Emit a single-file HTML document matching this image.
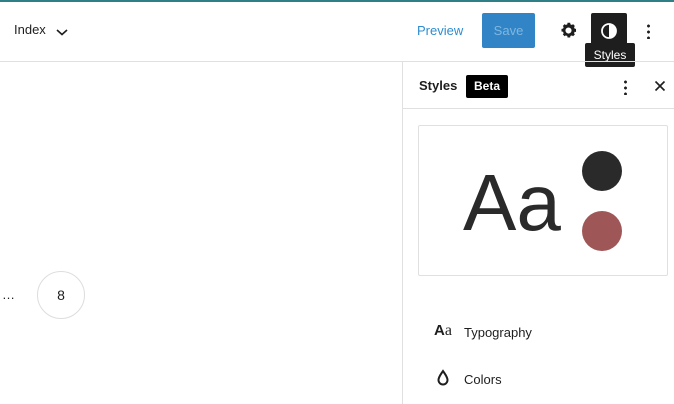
<!DOCTYPE html>
<html><head><meta charset="utf-8"><style>
*{box-sizing:border-box;margin:0;padding:0}
body{width:674px;height:404px;overflow:hidden;background:#fff;font-family:"Liberation Sans",sans-serif;color:#1e1e1e;position:relative}
.a{position:absolute}
</style></head><body>
<div class="a" style="left:0;top:0;width:674px;height:2px;background:#2f7f86"></div>
<div class="a" style="left:14px;top:22px;font-size:13px">Index</div>
<svg class="a" style="left:55px;top:25px" width="14" height="14" viewBox="0 0 14 14"><path d="M2 5l5 4.5L12 5" fill="none" stroke="#1e1e1e" stroke-width="1.6"/></svg>
<div class="a" style="left:417px;top:23px;font-size:13px;color:#2f8ccf">Preview</div>
<div class="a" style="left:482px;top:13px;width:53px;height:35px;background:#3185c6;border-radius:2px;color:#80b6e0;font-size:13px;text-align:center;line-height:35px">Save</div>
<svg class="a" style="left:558px;top:20px" width="21" height="21" viewBox="0 0 24 24"><path fill="#1e1e1e" d="M12 8.5a3.5 3.5 0 100 7 3.5 3.5 0 000-7zm8.6 5.2l-1.6-.3a7 7 0 01-.7 1.7l1 1.3-2.1 2.1-1.3-1a7 7 0 01-1.7.7l-.3 1.8h-3l-.3-1.8a7 7 0 01-1.7-.7l-1.3 1-2.1-2.1 1-1.3a7 7 0 01-.7-1.7l-1.8-.3v-3l1.8-.3a7 7 0 01.7-1.7l-1-1.3 2.1-2.1 1.3 1a7 7 0 011.7-.7l.3-1.8h3l.3 1.8a7 7 0 011.7.7l1.3-1 2.1 2.1-1 1.3a7 7 0 01.7 1.7l1.6.3z"/></svg>
<div class="a" style="left:591px;top:13px;width:36px;height:35px;background:#1e1e1e;border-radius:2px"></div>
<svg class="a" style="left:600px;top:22px" width="18" height="18" viewBox="0 0 18 18"><circle cx="9" cy="9" r="7" fill="none" stroke="#fff" stroke-width="1.8"/><path d="M9 2a7 7 0 010 14z" fill="#fff"/></svg>
<div class="a" style="left:585px;top:43px;width:50px;height:24px;background:#1e1e1e;border-radius:2px;color:#fff;font-size:12px;text-align:center;line-height:24px">Styles</div>
<div class="a" style="left:647px;top:23px;width:3px;height:16px;background:radial-gradient(circle,#1e1e1e 1.3px,transparent 1.6px) 0 0/3px 6px"></div>
<div class="a" style="left:0;top:61px;width:674px;height:1px;background:#e0e0e0"></div>
<div class="a" style="left:402px;top:62px;width:1px;height:342px;background:#e0e0e0"></div>
<div class="a" style="left:403px;top:108px;width:271px;height:1px;background:#e0e0e0"></div>
<div class="a" style="left:419px;top:78px;font-size:13px;font-weight:bold">Styles</div>
<div class="a" style="left:466px;top:75px;width:42px;height:23px;background:#000;border-radius:2px;color:#fff;font-size:12px;font-weight:bold;text-align:center;line-height:23px">Beta</div>
<div class="a" style="left:624px;top:79px;width:3px;height:16px;background:radial-gradient(circle,#1e1e1e 1.3px,transparent 1.6px) 0 0/3px 6px"></div>
<svg class="a" style="left:654px;top:80px" width="12" height="12" viewBox="0 0 12 12"><path d="M1.5 1.5l9 9M10.5 1.5l-9 9" stroke="#1e1e1e" stroke-width="1.6"/></svg>
<div class="a" style="left:418px;top:125px;width:250px;height:151px;border:1px solid #e0e0e0;border-radius:2px"></div>
<div class="a" style="left:463px;top:158px;font-size:80px;color:#2a2a2a;letter-spacing:0;line-height:90px">Aa</div>
<div class="a" style="left:582px;top:151px;width:40px;height:40px;border-radius:50%;background:#2a2a2a"></div>
<div class="a" style="left:582px;top:211px;width:40px;height:40px;border-radius:50%;background:#9e5656"></div>
<div class="a" style="left:434px;top:322px;font-size:15px;font-weight:bold">A<span style="font-family:'Liberation Serif',serif;font-weight:normal;font-size:16px">a</span></div>
<div class="a" style="left:464px;top:325px;font-size:13px">Typography</div>
<svg class="a" style="left:436px;top:369px" width="14" height="18" viewBox="0 0 14 18"><path d="M7 2C5 5 2.5 8 2.5 11a4.5 4.5 0 009 0C11.5 8 9 5 7 2z" fill="none" stroke="#1e1e1e" stroke-width="2"/></svg>
<div class="a" style="left:464px;top:372px;font-size:13px">Colors</div>
<div class="a" style="left:2px;top:287px;font-size:13px">…</div>
<div class="a" style="left:37px;top:271px;width:48px;height:48px;border:1px solid #ddd;border-radius:50%;text-align:center;line-height:46px;font-size:14px">8</div>
</body></html>
